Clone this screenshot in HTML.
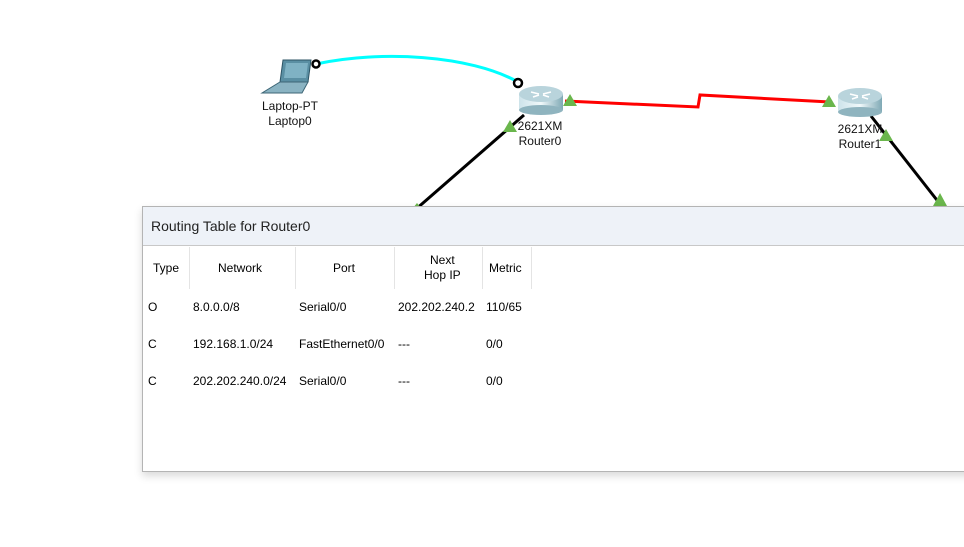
<!DOCTYPE html>
<html><head><style>
body{margin:0;width:964px;height:547px;background:#fff;position:relative;overflow:hidden;font-family:"Liberation Sans",Arial,sans-serif;}
.t{position:absolute;font-size:12px;color:#000;white-space:nowrap;}
.lbl{position:absolute;font-size:12px;color:#111;text-align:center;line-height:15px;}
#win{position:absolute;left:142px;top:206px;width:830px;height:264px;border:1px solid #b4b4b4;background:#fff;box-shadow:0 4px 8px rgba(0,0,0,0.15);}
#tb{height:38px;background:#eef2f8;border-bottom:1px solid #c8c8c8;font-size:14px;line-height:38px;padding-left:8px;color:#222;}
.sep{position:absolute;top:40px;width:1px;height:42px;background:#e4e4e4;}
</style></head><body>
<svg width="964" height="547" style="position:absolute;left:0;top:0">
<path d="M316 64 C380 50 470 55 518 82" stroke="#00ffff" stroke-width="3" fill="none"/>
<circle cx="316" cy="64" r="3.5" fill="#fff" stroke="#000" stroke-width="2.5"/>
<circle cx="518" cy="83" r="4" fill="#fff" stroke="#000" stroke-width="2.5"/>
<path d="M565 101 L698 107 L700 95 L830 102" stroke="#f00" stroke-width="3" fill="none"/>
<line x1="524" y1="115" x2="415" y2="210" stroke="#000" stroke-width="3"/>
<line x1="871" y1="116" x2="940" y2="204" stroke="#000" stroke-width="3"/>
<!-- laptop -->
<polygon points="283,60 311,60 308,82 280,82" fill="#5a8fa3" stroke="#2d5566"/>
<polygon points="286,63 308,63 306,78 284,78" fill="#7fb2c4"/>
<polygon points="280,82 308,82 302,93 262,93" fill="#8ab3c2" stroke="#3d6676"/>
<!-- routers -->
<defs><linearGradient id="g" x1="0" y1="0" x2="1" y2="0"><stop offset="0" stop-color="#cde3ea"/><stop offset=".5" stop-color="#f0f8fa"/><stop offset="1" stop-color="#7fa9b5"/></linearGradient></defs>
<g transform="translate(519,86)"><rect x="0" y="8" width="44" height="16" fill="url(#g)"/><ellipse cx="22" cy="24" rx="22" ry="5" fill="#8fb4bf"/><ellipse cx="22" cy="8" rx="22" ry="8" fill="#b9d4dc"/><path d="M12 6 L20 8 M24 8 L32 6 M14 11 L20 9 M24 9 L30 11" stroke="#fff" stroke-width="1.5"/></g>
<g transform="translate(838,88)"><rect x="0" y="8" width="44" height="16" fill="url(#g)"/><ellipse cx="22" cy="24" rx="22" ry="5" fill="#8fb4bf"/><ellipse cx="22" cy="8" rx="22" ry="8" fill="#b9d4dc"/><path d="M12 6 L20 8 M24 8 L32 6 M14 11 L20 9 M24 9 L30 11" stroke="#fff" stroke-width="1.5"/></g>
<g fill="#6ab64c">
<polygon points="570,94 577,106 563,106"/>
<polygon points="510,120 517,132 503,132"/>
<polygon points="829,95 836,107 822,107"/>
<polygon points="886,129 893,141 879,141"/>
<polygon points="940,193 947,206 933,206"/>
<polygon points="417,203 421,208 413,208"/>
</g>
</svg>
<div class="lbl" style="left:250px;top:99px;width:80px">Laptop-PT<br>Laptop0</div>
<div class="lbl" style="left:510px;top:119px;width:60px">2621XM<br>Router0</div>
<div class="lbl" style="left:830px;top:122px;width:60px">2621XM<br>Router1</div>
<div id="win"><div id="tb">Routing Table for Router0</div>
<div class="sep" style="left:46px"></div><div class="sep" style="left:152px"></div><div class="sep" style="left:251px"></div><div class="sep" style="left:339px"></div><div class="sep" style="left:388px"></div>
<div class="t" style="left:10px;top:54px">Type</div>
<div class="t" style="left:75px;top:54px">Network</div>
<div class="t" style="left:190px;top:54px">Port</div>
<div class="t" style="left:281px;top:46px;text-align:center;line-height:15px">Next<br>Hop IP</div>
<div class="t" style="left:346px;top:54px">Metric</div>
<div class="t" style="left:5px;top:93px">O</div><div class="t" style="left:50px;top:93px">8.0.0.0/8</div><div class="t" style="left:156px;top:93px">Serial0/0</div><div class="t" style="left:255px;top:93px">202.202.240.2</div><div class="t" style="left:343px;top:93px">110/65</div>
<div class="t" style="left:5px;top:130px">C</div><div class="t" style="left:50px;top:130px">192.168.1.0/24</div><div class="t" style="left:156px;top:130px">FastEthernet0/0</div><div class="t" style="left:255px;top:130px">---</div><div class="t" style="left:343px;top:130px">0/0</div>
<div class="t" style="left:5px;top:167px">C</div><div class="t" style="left:50px;top:167px">202.202.240.0/24</div><div class="t" style="left:156px;top:167px">Serial0/0</div><div class="t" style="left:255px;top:167px">---</div><div class="t" style="left:343px;top:167px">0/0</div>
</div>
</body></html>
